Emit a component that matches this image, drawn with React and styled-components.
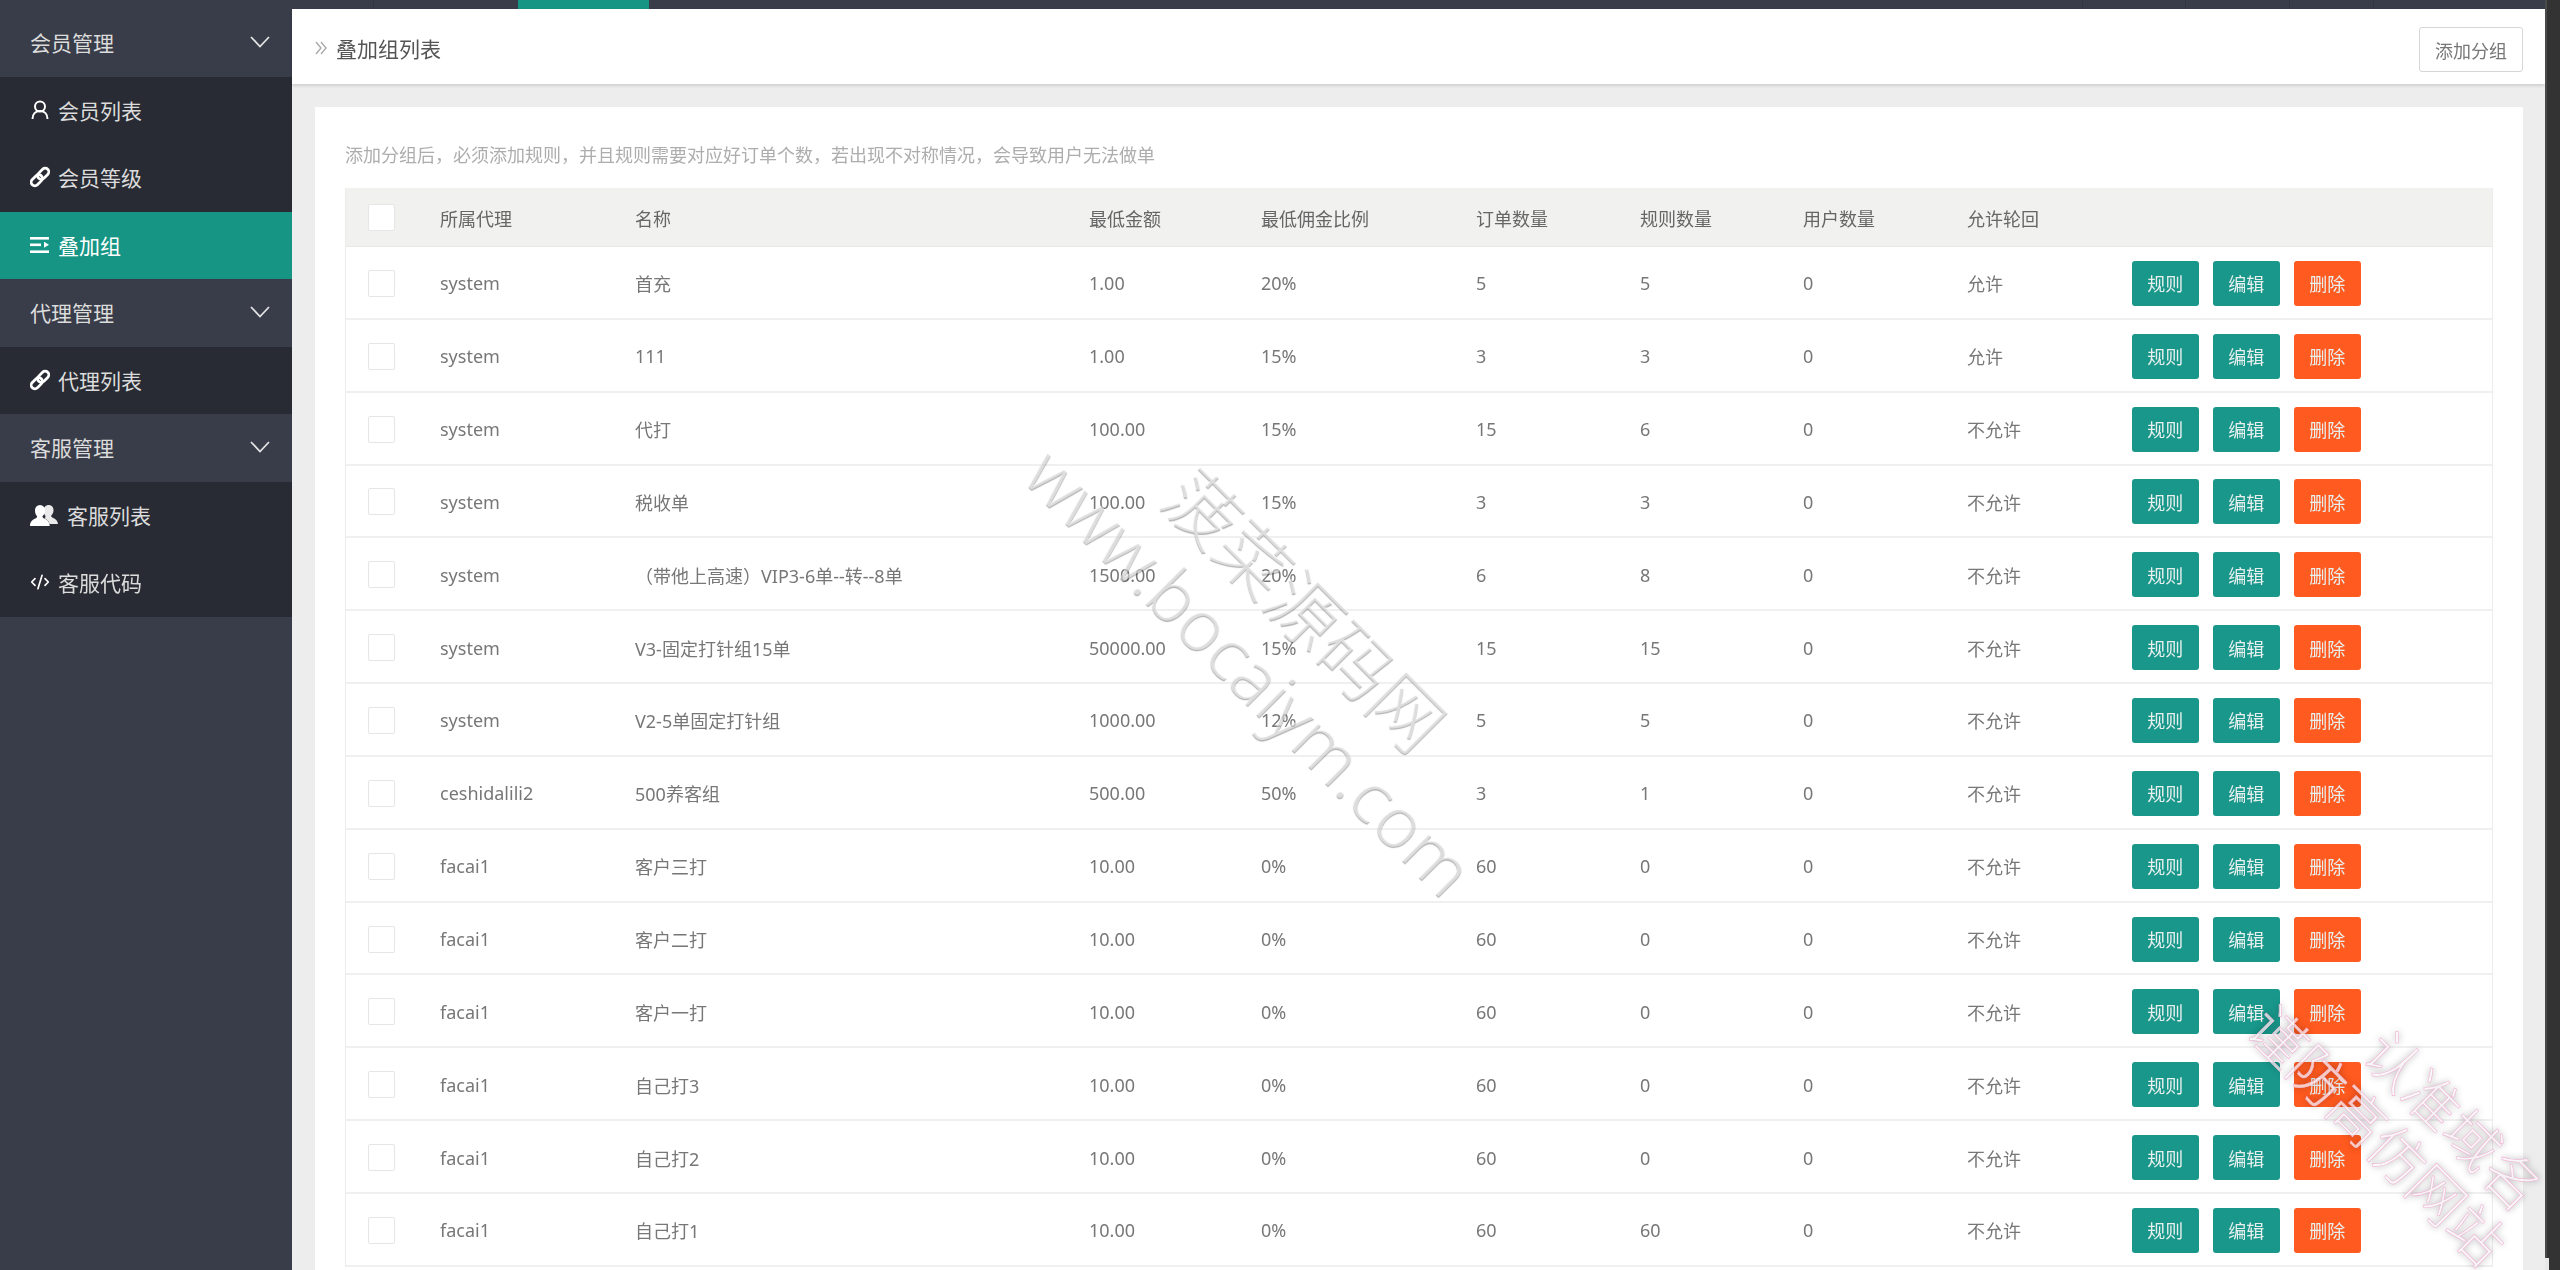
import React from "react";
import styled, { createGlobalStyle } from "styled-components";
import { CodeXml } from "lucide-react";

const Global = createGlobalStyle`
  html, body { margin: 0; padding: 0; height: 1270px; overflow: hidden; background: #333; }
  * { box-sizing: border-box; }
  body { font-family: "Noto Sans", "Noto Sans CJK SC", sans-serif; }
`;

const Shell = styled.div`
  position: relative; display: flex; width: 2560px; height: 1270px; overflow: hidden; filter: blur(0.55px);
`;
const Frame = styled.div`display: flex; flex-direction: column; flex: 1; min-width: 0;`;
const Scroll = styled.div`
  position: relative; width: 15px; background: #333; border-left: 2px solid #4a4a4a;
  &::after {
    content: ""; position: absolute; left: -2px; bottom: 0; width: 4px; height: 12px; background: #e8e8e8;
  }
`;

const TopBar = styled.div`display: flex; height: 9px; flex: none; background: #393d49;`;
const TopTab = styled.div`
  width: ${p => p.$w}px; flex: none; height: 9px;
  background: ${p => (p.$on ? "#169585" : "transparent")};
  border-right: ${p => (p.$line ? "1px solid #333642" : "none")};
`;

const Body = styled.div`display: flex; flex: 1; min-height: 0;`;
const Sidebar = styled.nav`width: 292px; flex: none; background: #393d49; color: #dcdcdc;`;
const GroupHead = styled.div`
  height: 67.5px; display: flex; align-items: center; justify-content: space-between;
  padding: 0 22px 2px 30px; font-size: 21px; background: #393d49;
`;
const NavItem = styled.div`
  height: 67.5px; display: flex; align-items: center; gap: ${p => p.$gap || 8}px;
  padding-left: 30px; padding-bottom: 1px; font-size: 21px;
  background: ${p => (p.$on ? "#169585" : "#282b33")};
  color: ${p => (p.$on ? "#fff" : "#dcdcdc")};
`;
const IconSlot = styled.span`
  display: inline-flex; align-items: center; justify-content: center; flex: none;
  width: ${p => p.$w || 20}px; height: 22px; color: #fff;
`;

const Main = styled.main`flex: 1; min-width: 0; display: flex; flex-direction: column; background: #ededed;`;
const Head = styled.header`
  flex: none; height: 75px; background: #fff; padding: 18px 22px 12px 23px;
  display: flex; align-items: flex-start; justify-content: space-between;
  box-shadow: 0 2px 3px rgba(0,0,0,.12); position: relative;
`;
const Title = styled.h1`
  margin: 0; height: 41px; display: flex; align-items: center; gap: 9px;
  font-size: 21px; font-weight: 400; color: #555;
`;
const Outline = styled.button`
  width: 104px; height: 45px; background: #fff; border: 1px solid #d6d6d6; border-radius: 3px;
  font: inherit; font-size: 18px; color: #777; padding: 0;
`;
const Content = styled.div`flex: 1; min-height: 0; padding: 23px 22px 0 23px;`;
const Card = styled.section`height: 100%; background: #fff; padding: 30px;`;
const Note = styled.p`
  margin: 0 0 15px; height: 36px; line-height: 36px; font-size: 18px; color: #adadad; white-space: nowrap;
`;
const Table = styled.div`border-left: 1px solid #ececec; border-right: 1px solid #ececec;`;
const cols = "94px 195px 454px 172px 215px 164px 163px 164px 165px 1fr";
const HeadRow = styled.div`
  display: grid; grid-template-columns: ${cols}; align-items: center; height: 59px; padding-top: 1px;
  background: #f1f1f0; border-bottom: 1px solid #e8e8e8; color: #666; font-size: 18px;
`;
const Row = styled.div`
  display: grid; grid-template-columns: ${cols}; align-items: center; height: 72.85px; padding-top: 2px;
  border-bottom: 2px solid #f0f0f0; color: #777; font-size: 18px; white-space: nowrap;
`;
const Check = styled.span`
  display: block; width: 27px; height: 27px; margin-left: 22px; background: #fff;
  border: 1px solid #e6e6e6; border-radius: 2px;
`;
const Actions = styled.div`display: flex; gap: 14.5px;`;
const Action = styled.button`
  width: 66.5px; height: 45px; border: 0; border-radius: 3px; padding: 0;
  background: ${p => (p.$danger ? "#ff5a1f" : "#18978a")}; color: #e8f0ee; font: inherit; font-size: 18px;
`;

const Layer = styled.div`position: absolute; inset: 0; pointer-events: none; overflow: hidden;`;
const Mark = styled.span`
  position: absolute; left: ${p => p.$x}px; top: ${p => p.$y}px; transform: translate(-50%, -50%) rotate(45deg);
  white-space: nowrap; font-size: ${p => p.$size}px; font-weight: 300;
  color: rgba(255,255,255,.55); text-shadow: 1px 1px 1px rgba(0,0,0,.3);
`;
const PinkMark = styled.span`
  position: absolute; left: ${p => p.$x}px; top: ${p => p.$y}px; transform: translate(-50%, -50%) rotate(45deg);
  white-space: nowrap; font-size: 56px; font-weight: 300; color: rgba(255,255,255,.72);
  -webkit-text-stroke: 0.6px #f2b6d6; text-shadow: 0 0 7px rgba(0,0,0,.35);
`;

const Chevron = () => (
  <svg width="20" height="12" viewBox="0 0 20 12" fill="none" stroke="#e3e3e3" strokeWidth="1.8">
    <polyline points="1,1 10,10.5 19,1" />
  </svg>
);
const Doubles = () => (
  <svg width="12" height="14" viewBox="0 0 12 14" fill="none" stroke="#aaa" strokeWidth="1.4">
    <polyline points="1,1 6,7 1,13" /><polyline points="6,1 11,7 6,13" />
  </svg>
);
const UserIcon = () => (
  <svg width="18" height="20" viewBox="0 0 18 20" fill="none" stroke="#fff" strokeWidth="2">
    <circle cx="9" cy="6.500" r="5" /><path d="M1.500 19c0-5 3-8 7.500-8s7.500 3 7.500 8" />
  </svg>
);
const LinkIcon = () => (
  <svg width="22" height="22" viewBox="0 0 22 22" fill="none" stroke="#fff" strokeWidth="3">
    <g transform="rotate(-45 11 11)">
      <rect x="-1" y="7" width="14" height="8" rx="4" />
      <rect x="9" y="7" width="14" height="8" rx="4" />
    </g>
  </svg>
);
const SpreadIcon = () => (
  <svg width="20" height="18" viewBox="0 0 20 18" fill="#fff">
    <rect x="0" y="1" width="19" height="2.600" /><rect x="0" y="7.500" width="11" height="2.600" />
    <rect x="0" y="14.400" width="19" height="2.600" /><path d="M14 5.800l5 3-5 3z" />
  </svg>
);
const FriendsIcon = () => (
  <svg width="28" height="22" viewBox="0 0 28 22" fill="#fff">
    <path d="M19 1c3 0 4.500 2.400 4.500 5.300 0 2.300-1 4.200-2.200 5.200-.5.800 0 1.500 1 2 2.600 1.200 5.200 2.400 5.700 6.500H19.500c-.3-3-2.600-4.500-5-5.700 1-1 1.200-1.800.7-2.900-1-1.300-1.700-3.100-1.700-5 0-3 2-5.400 5.500-5.400z" opacity=".9" />
    <path d="M10 1c3.300 0 5 2.500 5 5.600 0 2.300-1 4.300-2.300 5.500-.5.900 0 1.700 1 2.200 2.700 1.200 5.800 2.300 6 7.700H0c.1-5 3-6.500 5.900-7.700 1-.5 1.500-1.300 1-2.200C5.800 10.900 5 9 5 6.600 5 3.500 6.700 1 10 1z" />
  </svg>
);

const rows = [
  ["system", "首充", "1.00", "20%", "5", "5", "0", "允许"],
  ["system", "111", "1.00", "15%", "3", "3", "0", "允许"],
  ["system", "代打", "100.00", "15%", "15", "6", "0", "不允许"],
  ["system", "税收单", "100.00", "15%", "3", "3", "0", "不允许"],
  ["system", "（带他上高速）VIP3-6单--转--8单", "1500.00", "20%", "6", "8", "0", "不允许"],
  ["system", "V3-固定打针组15单", "50000.00", "15%", "15", "15", "0", "不允许"],
  ["system", "V2-5单固定打针组", "1000.00", "12%", "5", "5", "0", "不允许"],
  ["ceshidalili2", "500养客组", "500.00", "50%", "3", "1", "0", "不允许"],
  ["facai1", "客户三打", "10.00", "0%", "60", "0", "0", "不允许"],
  ["facai1", "客户二打", "10.00", "0%", "60", "0", "0", "不允许"],
  ["facai1", "客户一打", "10.00", "0%", "60", "0", "0", "不允许"],
  ["facai1", "自己打3", "10.00", "0%", "60", "0", "0", "不允许"],
  ["facai1", "自己打2", "10.00", "0%", "60", "0", "0", "不允许"],
  ["facai1", "自己打1", "10.00", "0%", "60", "60", "0", "不允许"],
];
const heads = ["所属代理", "名称", "最低金额", "最低佣金比例", "订单数量", "规则数量", "用户数量", "允许轮回"];

export default function App() {
  return (
    <>
      <Global />
      <Shell>
        <Frame>
          <TopBar>
            <TopTab $w={374} $line />
            <TopTab $w={144} />
            <TopTab $w={131} $on />
            <TopTab $w={1434} $line />
            <TopTab $w={103} $line />
            <TopTab $w={104} $line />
            <TopTab $w={84} $line />
          </TopBar>
          <Body>
            <Sidebar>
              <GroupHead>会员管理<Chevron /></GroupHead>
              <NavItem><IconSlot><UserIcon /></IconSlot>会员列表</NavItem>
              <NavItem><IconSlot><LinkIcon /></IconSlot>会员等级</NavItem>
              <NavItem $on><IconSlot><SpreadIcon /></IconSlot>叠加组</NavItem>
              <GroupHead>代理管理<Chevron /></GroupHead>
              <NavItem><IconSlot><LinkIcon /></IconSlot>代理列表</NavItem>
              <GroupHead>客服管理<Chevron /></GroupHead>
              <NavItem $gap={9}><IconSlot $w={28}><FriendsIcon /></IconSlot>客服列表</NavItem>
              <NavItem><IconSlot><CodeXml size={22} strokeWidth={2} /></IconSlot>客服代码</NavItem>
            </Sidebar>
            <Main>
              <Head>
                <Title><Doubles />叠加组列表</Title>
                <Outline>添加分组</Outline>
              </Head>
              <Content>
                <Card>
                  <Note>添加分组后，必须添加规则，并且规则需要对应好订单个数，若出现不对称情况，会导致用户无法做单</Note>
                  <Table>
                    <HeadRow>
                      <Check />
                      {heads.map(h => <span key={h}>{h}</span>)}
                    </HeadRow>
                    {rows.map((r, i) => (
                      <Row key={i}>
                        <Check />
                        {r.map((c, j) => <span key={j}>{c}</span>)}
                        <Actions>
                          <Action>规则</Action>
                          <Action>编辑</Action>
                          <Action $danger>删除</Action>
                        </Actions>
                      </Row>
                    ))}
                  </Table>
                </Card>
              </Content>
            </Main>
          </Body>
        </Frame>
        <Scroll />
        <Layer>
          <Mark $x={1251} $y={670} $size={71}>www.bocaiym.com</Mark>
          <Mark $x={1308} $y={607} $size={72}>菠菜源码网</Mark>
          <PinkMark $x={2455} $y={1118}>认准域名</PinkMark>
          <PinkMark $x={2380} $y={1133}>谨防高仿网站</PinkMark>
        </Layer>
      </Shell>
    </>
  );
}
